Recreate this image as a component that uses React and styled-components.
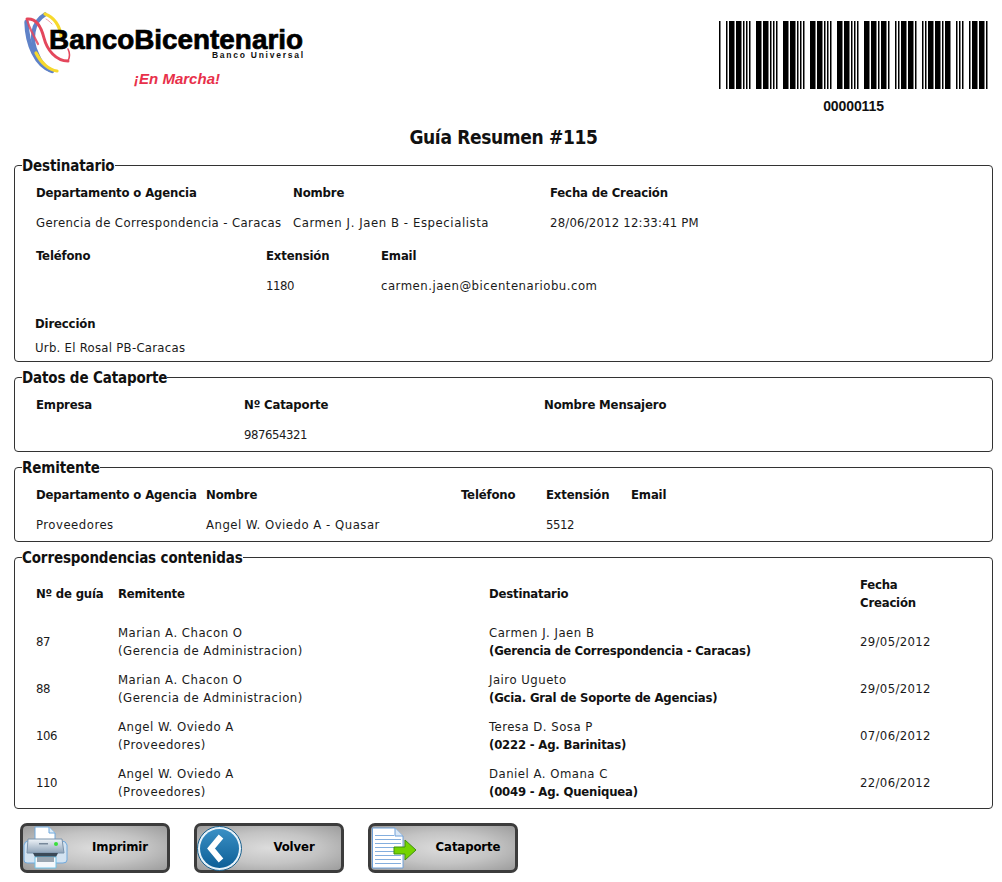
import React from "react";
import styled, { createGlobalStyle } from "styled-components";

const Global = createGlobalStyle`
  html, body { margin: 0; padding: 0; background: #fff; }
  body { font-family: "DejaVu Sans Condensed", "DejaVu Sans", sans-serif; font-stretch: condensed; font-size: 13px; letter-spacing: .5px; color: #1a1a1a; }
`;

const Page = styled.div`
  width: 1002px;
  height: 882px;
  overflow: hidden;
  box-sizing: border-box;
  padding: 0 9px 0 14px;
`;
const Header = styled.header`
  display: flex;
  justify-content: space-between;
  height: 124px;
  margin-left: -14px;
  margin-right: -9px;
`;
const LogoArt = styled.svg`
  display: block;
  width: 320px;
  height: 100px;
  letter-spacing: 0;
`;
const BarcodeBlock = styled.div`
  width: 269px;
  margin-right: 14px;
  padding-top: 21px;
  display: flex;
  flex-direction: column;
  align-items: center;
`;
const BarcodeArt = styled.svg`
  display: block;
  width: 269px;
  height: 68px;
`;
const BarcodeText = styled.div`
  font-family: "Liberation Sans", Arial, sans-serif;
  font-stretch: normal;
  font-weight: 700;
  font-size: 14px;
  letter-spacing: -.1px;
  line-height: 17px;
  margin-top: 9px;
  color: #111;
`;
const Title = styled.h1`
  margin: 0 0 6px;
  font-size: 19px;
  letter-spacing: -.35px;
  line-height: 26px;
  font-weight: 700;
  text-align: center;
  color: #111;
`;
const Box = styled.fieldset`
  margin: 0 0 6px;
  padding: 0;
  height: ${p => p.$h}px;
  box-sizing: border-box;
  border: 1px solid #333;
  border-radius: 4px;
  min-width: 0;
`;
const Legend = styled.legend`
  padding: 0;
  margin-left: 7px;
  font-size: 15px;
  letter-spacing: -.15px;
  line-height: 18px;
  font-weight: 700;
  color: #111;
  transform: translateY(1px);
`;
const Inner = styled.div`
  padding-left: 21px;
`;
const Row = styled.div`
  display: grid;
  grid-template-columns: ${p => p.$cols};
  height: ${p => p.$h || 30}px;
  line-height: ${p => p.$h || 30}px;
  margin-top: ${p => p.$mt || 0}px;
  margin-left: ${p => p.$ml || 0}px;
`;
const Head = styled.div`
  font-weight: 700;
  letter-spacing: -.15px;
  white-space: nowrap;
  color: #111;
`;
const Val = styled.div`
  white-space: nowrap;
  letter-spacing: ${p => (p.$ls !== undefined ? p.$ls : 0.5)}px;
`;
const TableGrid = styled.div`
  display: grid;
  grid-template-columns: 82px 371px 371px 1fr;
  padding-top: 10px;
`;
const THead = styled.div`
  font-weight: 700;
  letter-spacing: -.2px;
  line-height: 18px;
  height: 36px;
  display: flex;
  align-items: center;
  margin-bottom: 12px;
  color: #111;
`;
const TCell = styled.div`
  line-height: 18px;
  height: 47px;
  display: ${p => (p.$center ? "flex" : "block")};
  align-items: center;
  padding-bottom: ${p => (p.$center ? "11px" : "0")};
  box-sizing: border-box;
  white-space: nowrap;
  letter-spacing: ${p => (p.$ls !== undefined ? p.$ls : 0.5)}px;
`;
const Strong = styled.div`
  font-weight: 700;
  letter-spacing: -.2px;
  color: #111;
`;
const Buttons = styled.div`
  display: flex;
  gap: 24px;
  margin: 14px 0 0 6px;
`;
const Button = styled.button`
  position: relative;
  width: 150px;
  height: 50px;
  box-sizing: border-box;
  border: 3px solid #3c3c3c;
  border-radius: 7px;
  background: radial-gradient(ellipse at center, #dcdcdc 0%, #c4c4c4 50%, #9c9c9c 100%);
  padding: 0 0 3px 50px;
  font-family: inherit;
  font-stretch: condensed;
  font-size: 13px;
  letter-spacing: -.1px;
  font-weight: 700;
  color: #000;
`;
const Icon = styled.svg`
  position: absolute;
  left: 0;
  top: -2px;
  width: 50px;
  height: 48px;
`;

const C39 = { "*": "nwnnwnwnn", 0: "nnnwwnwnn", 1: "wnnwnnnnw", 5: "wnnnwwnnn" };
const N = 1.5, W = 5.5;
function bars() {
  const out = [];
  let x = 0;
  "*00000115*".split("").forEach(ch => {
    C39[ch].split("").forEach((c, i) => {
      const w = c === "w" ? W : N;
      if (i % 2 === 0) out.push(<rect key={out.length} x={x} y="0" width={w} height="68" />);
      x += w;
    });
    x += N;
  });
  return out;
}

const Logo = () => (
  <LogoArt viewBox="0 0 320 100">
    <g fill="none" strokeLinecap="round">
      <path d="M26.5 22 C27 44 36 66 52 71" stroke="#5f82c8" strokeWidth="4.4" />
      <path d="M45 14.5 C32 22 30 40 37 54 C40 62 44 67 50 70" stroke="#5f82c8" strokeWidth="4.2" />
      <path d="M45 14 C54 17 60 26 61 36" stroke="#f7d92c" strokeWidth="3.2" />
      <path d="M36 53 C41 63 49 70 57 71" stroke="#f7d92c" strokeWidth="3.2" />
      <path d="M27 19 C36 18 41 26 44 38 C47 50 56 61 68 61" stroke="#e4475c" strokeWidth="3" />
      <path d="M27 19 C28 26 32 32 38 44" stroke="#e4475c" strokeWidth="2.2" opacity=".85" />
      <path d="M68 61 C70 57 70 53 68 49" stroke="#e4475c" strokeWidth="1.6" />
      <path d="M46 19 C48 20 50 22 52 24" stroke="#f0a0a8" strokeWidth="1" />
    </g>
    <text x="49" y="48.5" fontFamily="Liberation Sans" fontWeight="700" fontSize="27" textLength="254" lengthAdjust="spacingAndGlyphs" stroke="#000" strokeWidth=".7">BancoBicentenario</text>
    <text x="212" y="58" fontFamily="Liberation Sans" fontWeight="700" fontSize="8.5" textLength="91" fill="#111">Banco Universal</text>
    <text x="134" y="84" fontFamily="Liberation Sans" fontWeight="700" fontStyle="italic" fontSize="14" textLength="86" lengthAdjust="spacingAndGlyphs" fill="#e8304a">¡En Marcha!</text>
  </LogoArt>
);

const PrinterIcon = () => (
  <Icon viewBox="0 0 50 48">
    <defs>
      <linearGradient id="pb" x1="0" y1="0" x2="0" y2="1"><stop offset="0" stopColor="#eef3f8" /><stop offset="1" stopColor="#8ea3b8" /></linearGradient>
    </defs>
    <path d="M12 3 H26 L32 9 V20 H12 Z" fill="#fff" stroke="#6fa8dc" />
    <path d="M26 3 V9 H32" fill="#dcebf7" stroke="#6fa8dc" />
    <path d="M5 17 H39 Q43 17 44 21 V36 Q44 39 40 39 H4 Q1 39 1 36 V21 Q2 17 5 17Z" fill="#d3e3f1" stroke="#6fa8dc" />
    <path d="M5 15 H39 L41 29 H4 Z" fill="url(#pb)" stroke="#7b93aa" />
    <rect x="16" y="19" width="9" height="1.5" fill="#77889a" />
    <circle cx="33" cy="20" r="2" fill="#39e03c" />
    <path d="M10 29 H35 L33 33 H12 Z" fill="#3b4a58" />
    <path d="M12 33 H33 V44 H12 Z" fill="#f5f8fb" stroke="#6fc2e8" />
    <rect x="14" y="33" width="17" height="5" fill="#9aa6b1" />
  </Icon>
);
const BackIcon = () => (
  <Icon viewBox="0 0 50 48">
    <defs>
      <linearGradient id="bb" x1="0" y1="0" x2="0" y2="1"><stop offset="0" stopColor="#3a8fc4" /><stop offset="1" stopColor="#0d5f97" /></linearGradient>
    </defs>
    <circle cx="22.5" cy="24.5" r="22" fill="#e8f3fa" stroke="#1a5f8c" />
    <circle cx="22.5" cy="24.5" r="19.5" fill="url(#bb)" />
    <path d="M24 12.5 L14 24.5 L24 36.5" fill="none" stroke="#fff" strokeWidth="6" />
  </Icon>
);
const DocIcon = () => (
  <Icon viewBox="0 0 50 48">
    <path d="M1.5 4 H24 L32 12 V44 H1.5 Z" fill="#fff" stroke="#6fa0d8" />
    <path d="M24 4 V12 H32" fill="#dbe8f6" stroke="#6fa0d8" />
    {[11, 15, 19, 23, 27, 31, 35, 39].map(y => (
      <rect key={y} x="4" y={y} width={y < 13 ? 19 : 26} height="1" fill="#83aede" />
    ))}
    <path d="M23 23 H34 V16 L45 26 L34 36 V30 H23 Z" fill="#74d400" stroke="#3f8f10" />
  </Icon>
);

const NUM = -0.45;
const DATE = 0.35;

export default function App() {
  return (
    <Page>
      <Global />
      <Header>
        <Logo />
        <BarcodeBlock>
          <BarcodeArt viewBox="0 0 269 68">{bars()}</BarcodeArt>
          <BarcodeText>00000115</BarcodeText>
        </BarcodeBlock>
      </Header>
      <Title>Guía Resumen #115</Title>

      <Box $h={206}>
        <Legend>Destinatario</Legend>
        <Inner>
          <Row $cols="257px 257px 1fr" $mt={4}><Head>Departamento o Agencia</Head><Head>Nombre</Head><Head>Fecha de Creación</Head></Row>
          <Row $cols="257px 257px 1fr"><Val $ls={0.38}>Gerencia de Correspondencia - Caracas</Val><Val $ls={0.57}>Carmen J. Jaen B - Especialista</Val><Val $ls={0.2}>28/06/2012 12:33:41 PM</Val></Row>
          <Row $cols="230px 115px 1fr" $mt={3}><Head>Teléfono</Head><Head>Extensión</Head><Head>Email</Head></Row>
          <Row $cols="230px 115px 1fr"><Val /><Val $ls={NUM}>1180</Val><Val>carmen.jaen@bicentenariobu.com</Val></Row>
          <Row $cols="1fr" $mt={11} $h={24} $ml={-1}><Head>Dirección</Head></Row>
          <Row $cols="1fr" $h={24} $ml={-1}><Val $ls={0.27}>Urb. El Rosal PB-Caracas</Val></Row>
        </Inner>
      </Box>

      <Box $h={84}>
        <Legend>Datos de Cataporte</Legend>
        <Inner>
          <Row $cols="208px 300px 1fr" $mt={4}><Head>Empresa</Head><Head>Nº Cataporte</Head><Head>Nombre Mensajero</Head></Row>
          <Row $cols="208px 300px 1fr"><Val /><Val $ls={NUM}>987654321</Val><Val /></Row>
        </Inner>
      </Box>

      <Box $h={84}>
        <Legend>Remitente</Legend>
        <Inner>
          <Row $cols="170px 255px 85px 85px 1fr" $mt={4}><Head>Departamento o Agencia</Head><Head>Nombre</Head><Head>Teléfono</Head><Head>Extensión</Head><Head>Email</Head></Row>
          <Row $cols="170px 255px 85px 85px 1fr"><Val>Proveedores</Val><Val>Angel W. Oviedo A - Quasar</Val><Val /><Val $ls={NUM}>5512</Val><Val /></Row>
        </Inner>
      </Box>

      <Box $h={261}>
        <Legend>Correspondencias contenidas</Legend>
        <Inner>
          <TableGrid>
            <THead>Nº de guía</THead><THead>Remitente</THead><THead>Destinatario</THead><THead>Fecha<br />Creación</THead>
            {[
              ["87", "Marian A. Chacon O", "Gerencia de Administracion", "Carmen J. Jaen B", "Gerencia de Correspondencia - Caracas", "29/05/2012"],
              ["88", "Marian A. Chacon O", "Gerencia de Administracion", "Jairo Ugueto", "Gcia. Gral de Soporte de Agencias", "29/05/2012"],
              ["106", "Angel W. Oviedo A", "Proveedores", "Teresa D. Sosa P", "0222 - Ag. Barinitas", "07/06/2012"],
              ["110", "Angel W. Oviedo A", "Proveedores", "Daniel A. Omana C", "0049 - Ag. Queniquea", "22/06/2012"],
            ].map(r => (
              <React.Fragment key={r[0]}>
                <TCell $center $ls={NUM}>{r[0]}</TCell>
                <TCell>{r[1]}<br />({r[2]})</TCell>
                <TCell>{r[3]}<Strong>({r[4]})</Strong></TCell>
                <TCell $center $ls={DATE}>{r[5]}</TCell>
              </React.Fragment>
            ))}
          </TableGrid>
        </Inner>
      </Box>

      <Buttons>
        <Button><PrinterIcon />Imprimir</Button>
        <Button><BackIcon />Volver</Button>
        <Button><DocIcon />Cataporte</Button>
      </Buttons>
    </Page>
  );
}
